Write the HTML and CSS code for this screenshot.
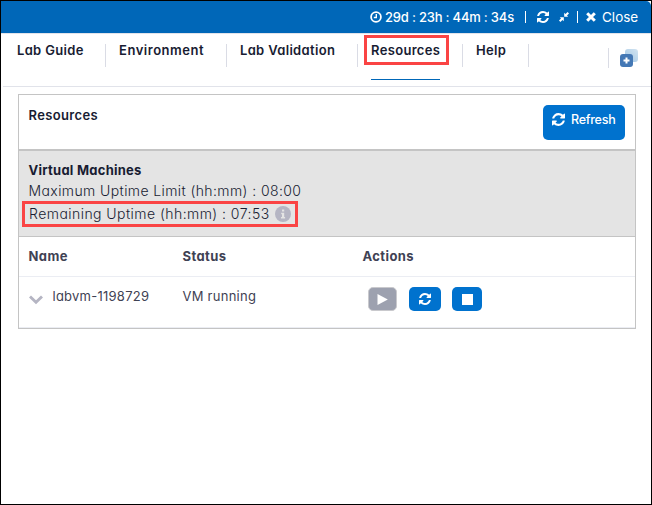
FILE: index.html
```html
<!DOCTYPE html>
<html lang="en">
<head>
<meta charset="utf-8">
<title>Lab Resources</title>
<link rel="stylesheet" href="styles.css">
</head>
<body>
<svg class="defs" aria-hidden="true">
  <symbol id="sync" viewBox="0 0 1536 1536">
    <path fill="currentColor" d="M1511 928q0 5-1 7-64 268-268 434.500T764 1536q-146 0-282.500-55T238 1324l-129 129q-19 19-45 19t-45-19-19-45V960q0-26 19-45t45-19h448q26 0 45 19t19 45-19 45l-137 137q71 66 161 102t187 36q134 0 250-65t186-179q11-17 53-117 8-23 30-23h192q13 0 22.500 9.500t9.500 22.500zM1536 128v448q0 26-19 45t-45 19h-448q-26 0-45-19t-19-45 19-45l138-138Q969 256 768 256q-134 0-250 65T332 500q-11 17-53 117-8 23-30 23H50q-13 0-22.500-9.500T18 608v-7q65-268 270-434.500T768 0q146 0 284 55.500T1297 212l130-129q19-19 45-19t45 19 19 45z"/>
  </symbol>
</svg>
<div class="window">
  <header class="topbar">
    <svg class="clock" viewBox="0 0 12 12" fill="none" stroke="currentColor"><circle cx="6" cy="6" r="4.9" stroke-width="1.8"/><path d="M6.300 3v3.500H3.800" stroke-width="1.400"/></svg>
    <span class="timer">29d : 23h : 44m : 34s</span>
    <i class="bar bar-first"></i>
    <svg class="sync-top"><use href="#sync"/></svg>
    <svg class="compress" viewBox="0 0 10 10" fill="currentColor"><path d="M5.200 4.800V.8l1.300 1.200L8.600 0 10 1.400 8 3.500l1.200 1.300zM4.800 5.200v4L3.500 8 1.400 10 0 8.600 2 6.500.8 5.200z"/></svg>
    <i class="bar bar-second"></i>
    <svg class="cross" viewBox="0 0 10 10" stroke="currentColor" stroke-width="3"><path d="M1.200 1.200l7.600 7.600M8.800 1.200L1.200 8.800"/></svg>
    <span class="close">Close</span>
  </header>
  <nav class="tabs">
    <a class="tab guide"><span>Lab Guide</span></a>
    <a class="tab environment"><span>Environment</span></a>
    <a class="tab validation"><span>Lab Validation</span></a>
    <a class="tab resources"><span>Resources</span></a>
    <a class="tab help"><span>Help</span></a>
    <div class="split"><svg width="18" height="18" viewBox="0 0 18 18">
      <defs><linearGradient id="pane" x1="0" y1="1" x2="1" y2="0"><stop offset="0" stop-color="#9fc5e4"/><stop offset="1" stop-color="#d3e4f1"/></linearGradient></defs>
      <rect x="5" width="13" height="13" rx="3" fill="url(#pane)"/><rect y="5" width="13" height="13" rx="3" fill="#4478b5"/>
      <path d="M6.500 8.500v6M3.500 11.500h6" stroke="#fff" stroke-width="2"/></svg></div>
  </nav>
  <main class="card">
    <section class="card-head">
      <h1>Resources</h1>
      <button class="refresh"><svg><use href="#sync"/></svg><span>Refresh</span></button>
    </section>
    <section class="summary">
      <h2>Virtual Machines</h2>
      <p class="maximum">Maximum Uptime Limit (hh:mm) : 08:00</p>
      <p class="remaining"><span>Remaining Uptime (hh:mm) : 07:53</span>
        <svg width="16" height="16" viewBox="0 0 16 16"><circle cx="8" cy="8" r="8" fill="#b5b5c3"/><path d="M7 3.500h2.200v1.900H7zM6.200 6.700h3v4.200h.9v1.500H6v-1.500h1V8.200h-.8z" fill="#e4e4e4"/></svg></p>
    </section>
    <div class="row labels"><b class="l-name">Name</b><b class="l-status">Status</b><b class="l-actions">Actions</b></div>
    <div class="row machine">
      <div class="name"><svg width="14" height="10" viewBox="0 0 14 10" fill="none" stroke="#b5b5c3" stroke-width="2.900"><path d="M1 1.500l6 5.700 6-5.700"/></svg><span>labvm-1198729</span></div>
      <div class="status"><span>VM running</span></div>
      <div class="actions">
        <button class="play"><svg width="11" height="11" viewBox="0 0 11 11"><path d="M.5 0l10.300 5.500L.5 11z" fill="#fff"/></svg></button>
        <button class="restart"><svg width="12" height="12"><use href="#sync"/></svg></button>
        <button class="stop"><svg width="11" height="11"><path d="M0 0h11v11H0z" fill="#fff"/></svg></button>
      </div>
    </div>
  </main>
</div>
</body>
</html>
```
FILE: styles.css
```css
*, *::before, *::after { box-sizing: border-box; }
body {
  margin: 0;
  background: #3b3b3b;
  color: #181c32;
  font: 13px/20px Inter, "Open Sans", sans-serif;
  font-feature-settings: "cv11";
}
h1, h2, p { margin: 0; font-size: 13px; line-height: 20px; }
button { border: 0; padding: 0; color: #fff; font: inherit; background: #0072ce; border-radius: 5px; }
span, b, h1, h2, p { white-space: nowrap; }
svg { display: block; flex: none; }
.defs { position: absolute; width: 0; height: 0; }
.window { height: 505px; border: 1px solid #000; background: #fff; }

.topbar { display: flex; height: 32px; padding-left: 369px; align-items: center; color: #fff; background: #0067b8; border-top-right-radius: 5px; box-shadow: 0 1px #e1e3ea; }
.topbar > * { flex: none; }
.clock { width: 12px; height: 12px; margin-right: 3px; }
.timer { width: 130px; font-weight: 500; letter-spacing: -.2px; }
.bar { width: 1px; height: 12px; background: #fff; }
.bar-first { margin-left: 10px; }
.sync-top { width: 12px; height: 12px; margin-left: 11px; }
.compress { width: 10px; height: 10px; margin-left: 10px; }
.bar-second { margin-left: 8px; }
.cross { width: 10px; height: 10px; margin-left: 8px; }
.close { margin-left: 6px; font-size: 13.500px; }

.tabs { display: flex; height: 54px; margin-left: 2px; padding-top: 11px; border-bottom: 1px solid #e1e3ea; }
.tab { flex: none; height: 23px; padding-left: 13px; border-right: 1px solid #dadce5; font-weight: 600; line-height: 13px; letter-spacing: .33px; }
.guide { width: 103px; padding-left: 14px; }
.environment { width: 121px; letter-spacing: .53px; }
.validation { width: 131px; }
.resources { position: relative; width: 105px; }
.resources::before { content: ""; position: absolute; left: 6px; top: -9px; width: 85px; height: 30px; border: 3px solid #fa4444; }
.resources::after { content: ""; position: absolute; left: 13px; top: 35px; width: 69px; height: 1px; background: #0067b8; }
.help { width: 66px; }
.split { height: 20px; margin: 4px 0 0 79px; padding: 1px 0 0 11px; border-left: 1px solid #dadce5; }

.card { width: 618px; margin: 7px 0 0 17px; border: 1px solid #c4c4c4; }
.card-head { display: flex; justify-content: space-between; height: 56px; padding: 10px 10px 0 9.500px; border-bottom: 2px solid #c4c4c4; }
h1 { font-weight: 600; letter-spacing: .35px; }
.refresh { display: flex; width: 82px; height: 35px; padding: 8px 0 0 9px; }
.refresh svg { width: 13px; height: 13px; margin-right: 6px; }
.refresh span { font-size: 12.500px; line-height: 14px; font-weight: 500; letter-spacing: -.25px; }
.summary { height: 86px; padding: 10px 9.500px 0; background: #e4e4e4; border-bottom: 1px solid #c4c4c4; }
h2 { font-weight: 700; line-height: 19px; letter-spacing: .25px; }
.maximum { font-size: 14px; font-weight: 300; line-height: 21px; letter-spacing: .4px; }
.remaining { display: flex; align-items: center; width: 276px; height: 26px; margin-left: -6.500px; padding-left: 4px; border: 3px solid #fa4444; font-size: 14px; font-weight: 300; letter-spacing: .45px; }
.remaining span { width: 246px; }
.row { display: grid; grid-template-columns: 154px 180px 1fr; padding-left: 9.500px; }
.labels { height: 40px; padding-top: 9px; color: #3f4254; border-bottom: 1px solid #ebedf3; }
.labels b { font-weight: 700; letter-spacing: .4px; }
.machine { height: 51px; color: #3f4254; border-bottom: 1px solid #ebedf3; letter-spacing: .25px; }
.name { display: flex; padding-top: 9px; }
.name svg { margin: 9px 10px 0 0; }
.status { padding-top: 9px; }
.actions { display: flex; padding: 10px 0 0 5.500px; }
.actions button { display: flex; align-items: center; justify-content: center; height: 24px; }
.actions .play { width: 29px; background: #9da1af; border: 1px solid #c9c9cd; }
.restart { width: 32px; margin-left: 12px; }
.stop { width: 30px; margin-left: 11px; }
```
